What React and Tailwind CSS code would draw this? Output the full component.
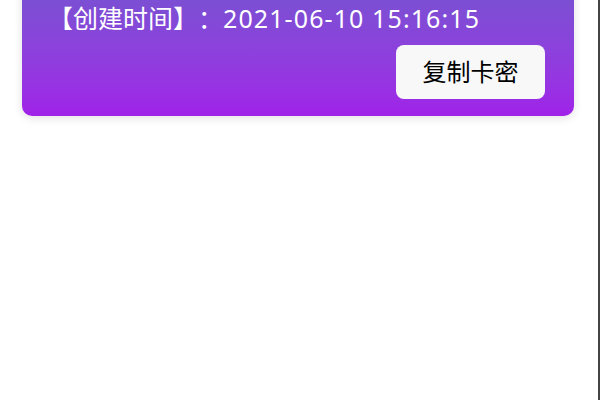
import React from 'react';

export default function App() {
  return (
    <div className="w-[600px] h-[400px] bg-white overflow-hidden relative" style={{ fontFamily: '"Noto Sans", "Noto Sans CJK SC", sans-serif' }}>
      <div className="pl-[22px] pr-[26px]">
        <div className="-mt-[40px] rounded-[10px] bg-gradient-to-b from-[#6d58cc] to-[#a021e8] pl-[26px] pr-[29px] pt-[40px] pb-[17px] shadow-[0_2px_10px_rgba(0,0,0,0.12)]">
          <div className="text-white text-[25px] leading-[36px] h-[36px] whitespace-nowrap [text-spacing-trim:space-all]">
            【创建时间】：<span className="tracking-[1.1px]">2021-06-10 15:16:15</span>
          </div>
          <div className="flex justify-end mt-[9px]">
            <button className="w-[149px] h-[54px] rounded-[8px] bg-[#f8f8f8] text-black text-[24px] leading-none">复制卡密</button>
          </div>
        </div>
      </div>
      <div className="absolute right-0 top-0 w-[2px] h-full bg-[#444]" />
    </div>
  );
}
